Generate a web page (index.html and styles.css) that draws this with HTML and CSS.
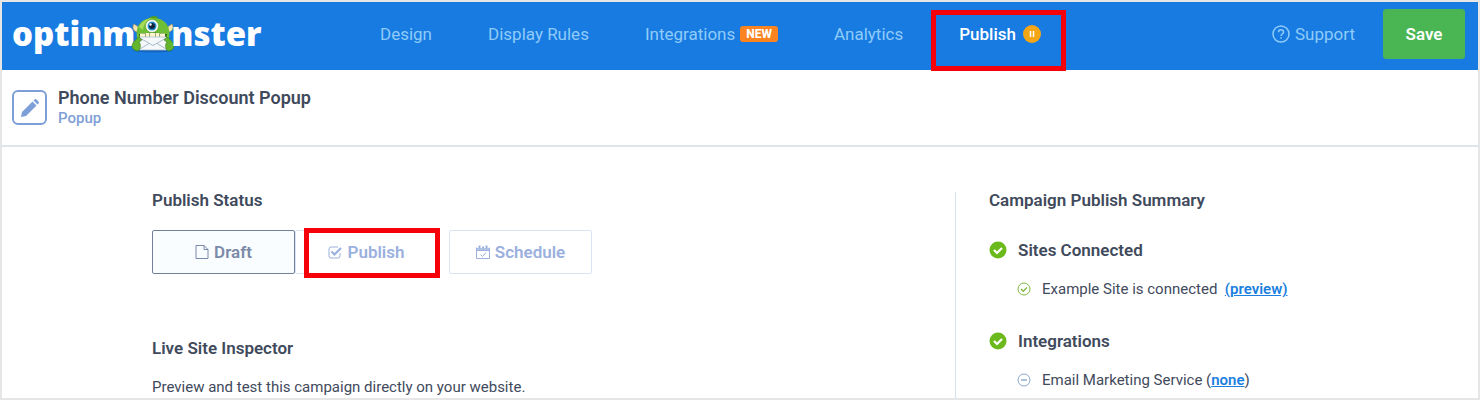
FILE: index.html
```html
<!DOCTYPE html>
<html lang="en">
<head>
    <meta charset="UTF-8">
    <meta name="viewport" content="width=device-width, initial-scale=1.0">
    <title>OptinMonster - Publish</title>
    <link rel="stylesheet" href="styles.css">
</head>
<body>

    <!-- top bar -->
    <header class="topbar">
        <a href="#" class="logo">
            <span>optinm</span>
            <svg class="monster" viewBox="0 0 46 40" width="46" height="40" aria-hidden="true">
                <ellipse cx="23" cy="36" rx="20" ry="2.500" fill="#0f55a5" opacity=".6"/>
                <path d="M18 5q4-5 10-2l-3 3z" fill="#4f9c1a"/>
                <path d="M7 18c-4-1-5-5-3-8l6 4zM39 18c4-1 5-5 3-8l-6 4z" fill="#f3e3b0" stroke="#a28a4b" stroke-width=".6"/>
                <path d="M7 24C5 11 12 4 23 4s18 7 16 20l-2 11H9z" fill="#6fbf36"/>
                <path d="M9 13c2-5 7-8 13-9-6 3-9 7-9 12z" fill="#a9dd5b"/>
                <path d="M9 20q14-3 28 0l-1 6H10z" fill="#34691a"/>
                <path d="M10 19.500h5v4h-5zM15.500 19h4v4h-4zM20 19h5v4h-5zM25.500 19h4v4h-4zM30 19.500h5v4h-5z" fill="#fff4cf"/>
                <circle cx="22" cy="12" r="6.500" fill="#fff" stroke="#5a9a2b" stroke-width=".6"/>
                <circle cx="22" cy="12" r="4.500" fill="#238fd0"/>
                <circle cx="22" cy="12" r="3" fill="#10253c"/>
                <circle cx="20.500" cy="10.500" r="1.200" fill="#fff"/>
                <rect x="9" y="23" width="28" height="13" rx="1" fill="#f5f8fb" stroke="#a9bac9" stroke-width=".7"/>
                <path d="M9 23.500l14 8 14-8M9 35.500l10-6M37 35.500l-10-6" fill="none" stroke="#a9bac9" stroke-width="1"/>
                <path d="M9 23l3 3-3 2c2 2 2 7-1 9-4 0-6-3-6-5 0-3 3-6 7-9zM37 23l-3 3 3 2c-2 2-2 7 1 9 4 0 6-3 6-5 0-3-3-6-7-9z" fill="#62b52c" stroke="#397d17" stroke-width=".6"/>
            </svg>
            <span>nster</span>
        </a>

        <nav class="nav">
            <a href="#">Design</a>
            <a href="#">Display Rules</a>
            <a href="#">Integrations <span class="badge">NEW</span></a>
            <a href="#">Analytics</a>
            <a href="#" class="active">Publish
                <svg viewBox="0 0 18 18" width="18" height="18" aria-hidden="true">
                    <circle cx="9" cy="9" r="9" fill="#f5a616"/>
                    <path d="M7.500 6v6M10.500 6v6" stroke="#fff" stroke-width="1.500"/>
                </svg>
                <span class="highlight highlight-nav"></span>
            </a>
        </nav>

        <div class="actions">
            <a href="#" class="support">
                <svg viewBox="0 0 18 18" width="18" height="18" fill="none" stroke="currentColor" stroke-width="1.500" aria-hidden="true">
                    <circle cx="9" cy="9" r="8"/>
                    <path d="M6.500 7.200c0-3.200 5-3.200 5 0 0 1.800-2.500 1.800-2.500 3.800M9 12.300v1.500"/>
                </svg>
                Support
            </a>
            <button type="button" class="save">Save</button>
        </div>
    </header>

    <!-- campaign name -->
    <section class="campaign">
        <button type="button" class="edit" aria-label="Edit campaign">
            <svg viewBox="0 0 20 20" width="20" height="20" fill="#7d9fd8" aria-hidden="true">
                <path d="M1 19l1-5L12.500 3.500l4 4L6 18zM13.500 2.500l1-1q1-1 2 0l2 2q1 1 0 2l-1 1z"/>
            </svg>
        </button>
        <div>
            <h1>Phone Number Discount Popup</h1>
            <p>Popup</p>
        </div>
    </section>

    <main class="content">
        <div class="settings">
            <h2>Publish Status</h2>
            <div class="status">
                <button type="button" class="status-btn selected">
                    <svg viewBox="0 0 14 16" width="14" height="16" fill="none" stroke="currentColor" aria-hidden="true">
                        <path d="M1 1.500h8l4 4v9H1zM9 1.500v4h4"/>
                    </svg>
                    Draft
                </button>
                <button type="button" class="status-btn">
                    <svg viewBox="0 0 14 16" width="14" height="16" fill="none" stroke="currentColor" aria-hidden="true">
                        <path d="M12 9v3q0 2-2 2H3q-2 0-2-2V5q0-2 2-2h7"/>
                        <path d="M3.500 7.500l3 3L13 4" stroke-width="2.200"/>
                    </svg>
                    Publish
                    <span class="highlight highlight-status"></span>
                </button>
                <button type="button" class="status-btn schedule">
                    <svg viewBox="0 0 14 16" width="14" height="16" fill="none" stroke="currentColor" aria-hidden="true">
                        <path d="M.5 3.500v11h13v-11M.5 6.500h13"/>
                        <path d="M.5 5h13" stroke-width="1.500"/>
                        <path d="M3.500 1.500v3M10.500 1.500v3M7 2.500v2" stroke-width="2"/>
                        <path d="M4.500 10.500l2 2 3.500-4"/>
                    </svg>
                    Schedule
                </button>
            </div>

            <h2>Live Site Inspector</h2>
            <p class="text">Preview and test this campaign directly on your website.</p>
        </div>

        <aside class="summary">
            <h2>Campaign Publish Summary</h2>

            <h3>
                <svg viewBox="0 0 18 18" width="18" height="18" aria-hidden="true">
                    <circle cx="9" cy="9" r="8.500" fill="#6cb91c"/>
                    <path d="M5 9l3 3 5-5" fill="none" stroke="#fff" stroke-width="2.200"/>
                </svg>
                Sites Connected
            </h3>
            <p class="item">
                <svg viewBox="0 0 14 14" width="14" height="14" fill="none" stroke="#7fb841" aria-hidden="true">
                    <circle cx="7" cy="7" r="6"/>
                    <path d="M4 7l2.200 2.200L10 5.500" stroke-width="1.400"/>
                </svg>
                <span>Example Site is connected&nbsp; <a href="#">(preview)</a></span>
            </p>

            <h3>
                <svg viewBox="0 0 18 18" width="18" height="18" aria-hidden="true">
                    <circle cx="9" cy="9" r="8.500" fill="#6cb91c"/>
                    <path d="M5 9l3 3 5-5" fill="none" stroke="#fff" stroke-width="2.200"/>
                </svg>
                Integrations
            </h3>
            <p class="item">
                <svg viewBox="0 0 14 14" width="14" height="14" fill="none" stroke="#8ca6cf" aria-hidden="true">
                    <circle cx="7" cy="7" r="6"/>
                    <path d="M4 7h6" stroke-width="1.400"/>
                </svg>
                <span>Email Marketing Service (<a href="#">none</a>)</span>
            </p>
        </aside>
    </main>

</body>
</html>
```
FILE: styles.css
```css
* {
    box-sizing: border-box;
}

body {
    margin: 0;
    min-height: 100vh;
    display: flex;
    flex-direction: column;
    border: 2px solid #e6e6e6;
    background: #fff;
    color: #3f4a5c;
    font-family: Roboto, "Liberation Sans", sans-serif;
}

h1, h2, h3, p {
    margin: 0;
}

button {
    font-family: inherit;
    cursor: pointer;
}

svg {
    flex-shrink: 0;
}

/* top bar */
.topbar {
    display: flex;
    align-items: center;
    height: 68px;
    padding: 0 13px 4px 10px;
    background: #187be2;
}

.logo {
    display: flex;
    align-items: center;
    width: 248px;
    color: #fff;
    font-family: "Open Sans", sans-serif;
    font-size: 33px;
    font-weight: 800;
    line-height: 48px;
    text-decoration: none;
}

.monster {
    margin: 0 -5px;
}

.nav {
    display: flex;
    gap: 56px;
    margin-left: 120px;
}

.nav a,
.support {
    display: flex;
    align-items: center;
    gap: 5px;
    color: #8fcbf8;
    font-size: 17px;
    line-height: 24px;
    text-decoration: none;
    white-space: nowrap;
}

.nav .active {
    position: relative;
    gap: 7px;
    color: #fff;
    font-weight: 500;
}

.badge {
    padding: 0 6px;
    border-radius: 3px;
    background: #fb8320;
    color: #fff;
    font-size: 12px;
    font-weight: 800;
    line-height: 16px;
}

.actions {
    display: flex;
    align-items: center;
    gap: 28px;
    margin-left: auto;
}

.save {
    width: 82px;
    height: 50px;
    border: 0;
    border-radius: 3px;
    background: #49b553;
    color: #fff;
    font-size: 17px;
    font-weight: 600;
}

/* red callout frames */
.highlight {
    position: absolute;
    border: 5px solid #f60009;
    pointer-events: none;
}

.highlight-nav {
    inset: -12px -25px -25px -28px;
}

.highlight-status {
    inset: -3px -3px -5px 8px;
}

/* campaign name */
.campaign {
    display: flex;
    align-items: center;
    gap: 11px;
    height: 77px;
    padding: 0 10px;
    border-bottom: 2px solid #dfe6eb;
}

.edit {
    display: flex;
    align-items: center;
    justify-content: center;
    width: 35px;
    height: 35px;
    padding: 0;
    border: 2px solid #7d9fd8;
    border-radius: 6px;
    background: #fff;
}

.campaign h1 {
    font-size: 18px;
    font-weight: 600;
    line-height: 20px;
}

.campaign p {
    color: #809fd6;
    font-size: 15px;
    font-weight: 500;
    line-height: 20px;
}

/* content */
.content {
    flex: 1;
    display: flex;
    padding: 45px 0 0 150px;
}

.settings {
    flex: 1;
}

h2, h3 {
    font-size: 17px;
    font-weight: 600;
    line-height: 16px;
}

.status {
    display: flex;
    margin: 22px 0 66px;
}

.status-btn {
    position: relative;
    display: flex;
    align-items: center;
    justify-content: center;
    gap: 5px;
    width: 143px;
    height: 44px;
    padding: 0;
    border: 1px solid #dae5f4;
    border-radius: 2px;
    background: #fff;
    color: #9bb0de;
    font-size: 17px;
    font-weight: 600;
}

.status-btn.selected {
    border-color: #72809a;
    background: #f9fdff;
    color: #7b8aa8;
}

.schedule {
    margin-left: 11px;
}

.text,
.item {
    font-size: 15px;
    line-height: 20px;
}

.text {
    margin-top: 21px;
}

.summary {
    width: 523px;
    padding-left: 33px;
    border-left: 1px solid #d5e2ea;
}

.summary h3 {
    display: flex;
    align-items: center;
    gap: 11px;
    margin-top: 33px;
    line-height: 18px;
}

.item {
    display: flex;
    align-items: center;
    gap: 11px;
    margin-top: 20px;
    padding-left: 28px;
}

.item a {
    color: #1b7fe0;
    font-weight: 600;
}
```
